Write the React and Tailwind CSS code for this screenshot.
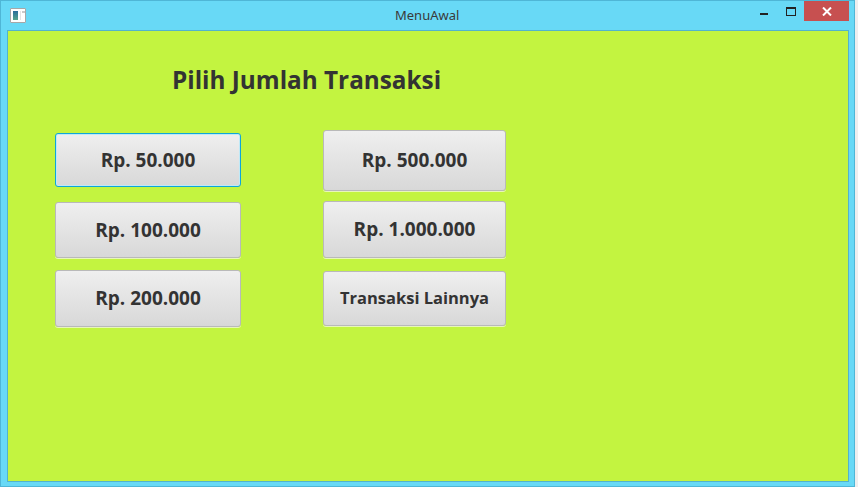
import React from "react";

const font = { fontFamily: '"Open Sans", "Noto Sans", sans-serif' };

const Btn = ({ label, w, h, mt, focused, small }) => (
  <button
    className={
      "flex items-center justify-center rounded-[3px] border bg-gradient-to-b from-[#efefef] to-[#d8d8d8] font-bold text-[#333333] " +
      (focused
        ? "border-[#0fa6d8] shadow-[inset_0_0_0_1px_#bfe9f7]"
        : "border-[#b9b9b9] shadow-[0_1px_0_#e8f7b8]") +
      (small ? " text-[16.5px]" : " text-[19px]")
    }
    style={{ width: w, height: h, marginTop: mt }}
  >
    {label}
  </button>
);

export default function App() {
  return (
    <div className="flex h-[487px] w-[858px] overflow-hidden bg-[#eeeeee]" style={font}>
      <div className="flex h-[487px] w-[855px] flex-col border border-[#4fb6d6] bg-[#68d9f6]">
        {/* title bar */}
        <div className="flex h-[29px] items-start">
          <div className="ml-[9px] mt-[7px] flex h-[15px] w-[16px] overflow-hidden rounded-[1px] border border-[#a7a7a7] bg-white">
            <div className="mx-[2px] my-[2px] w-[5px] bg-gradient-to-b from-[#2c6d9a] to-[#57a58a]" />
            <div className="my-[2px] w-[2px] bg-[#e4e4e4]" />
            <div className="ml-[1px] mt-[2px] h-[2px] w-[3px] bg-[#c9c9c9]" />
          </div>
          <div className="flex-1 pl-[369px] pt-[5px] text-[13px] text-[#3a3a3a]" style={{ fontFamily: '"Noto Sans", sans-serif' }}>
            MenuAwal
          </div>
          <div className="mt-[12px] h-[2px] w-[8px] bg-[#222]" />
          <div className="ml-[18px] mt-[6px] h-[9px] w-[10px] border border-t-2 border-[#222]" />
          <div className="ml-[8px] flex h-[20px] w-[45px] items-center justify-center bg-[#c75050] text-white">
            <svg width="10" height="9" viewBox="0 0 10 9">
              <path d="M1 0.5 L9 8.5 M9 0.5 L1 8.5" stroke="white" strokeWidth="2" />
            </svg>
          </div>
          <div className="w-[5px]" />
        </div>

        {/* content */}
        <div className="ml-[6px] mr-[5px] h-[452px] border border-[#52b3cd] bg-[#c3f440]">
          <div className="pl-[164px] pt-[33px] text-[24.3px] font-bold leading-[32px] text-[#333333]">
            Pilih Jumlah Transaksi
          </div>
          <div className="flex pl-[47px]">
            <div className="flex flex-col">
              <Btn label="Rp. 50.000" w={186} h={54} mt={37} focused />
              <Btn label="Rp. 100.000" w={186} h={56} mt={15} />
              <Btn label="Rp. 200.000" w={186} h={57} mt={12} />
            </div>
            <div className="ml-[82px] flex flex-col">
              <Btn label="Rp. 500.000" w={183} h={61} mt={34} />
              <Btn label="Rp. 1.000.000" w={183} h={57} mt={10} />
              <Btn label="Transaksi Lainnya" w={183} h={55} mt={13} small />
            </div>
          </div>
        </div>
      </div>
    </div>
  );
}
